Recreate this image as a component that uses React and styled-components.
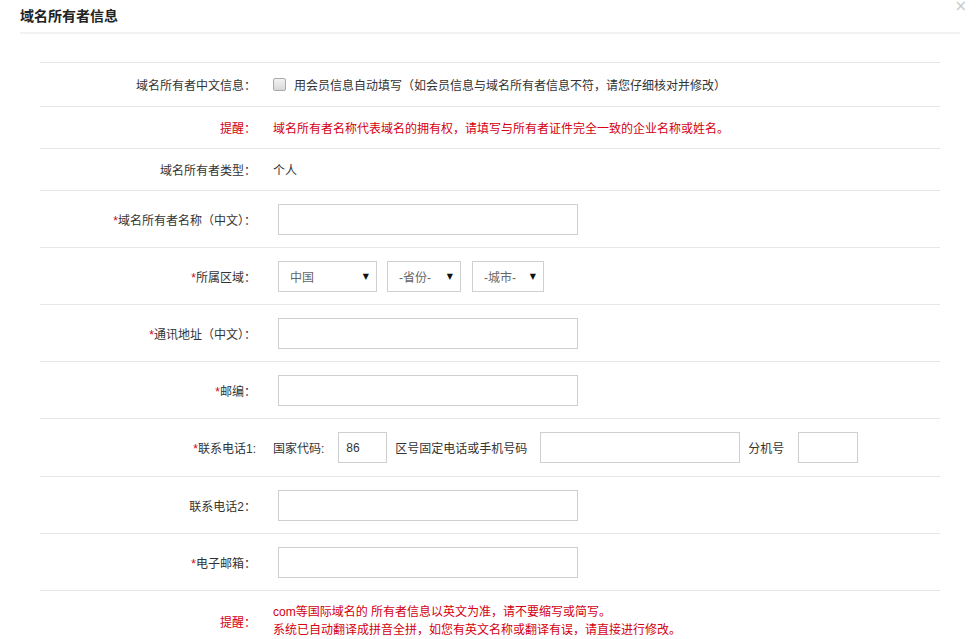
import React from 'react';
import styled, { createGlobalStyle } from 'styled-components';

const GlobalStyle = createGlobalStyle`
  html, body {
    margin: 0;
    background: #fff;
  }
  body {
    font-family: "Liberation Sans", "Noto Sans CJK SC", sans-serif;
    font-size: 12px;
    color: #333;
  }
`;

const Dialog = styled.div`
  position: relative;
  width: 979px;
  padding: 0 0 20px;
`;

const Header = styled.div`
  margin: 0 19px 0 20px;
  height: 32px;
  border-bottom: 2px solid #f2f2f2;
  display: flex;
  align-items: center;
`;

const Title = styled.h2`
  margin: 0;
  font-size: 14px;
  font-weight: bold;
  color: #222;
  line-height: 20px;
`;

const Close = styled.span`
  position: absolute;
  top: 0;
  right: 12px;
  font-size: 15px;
  line-height: 12px;
  color: #c8c8c8;
  font-family: "DejaVu Sans", sans-serif;
`;

const Table = styled.div`
  margin: 28px 39px 0 40px;
`;

const Row = styled.div`
  display: grid;
  grid-template-columns: 216px 1fr;
  align-items: center;
  min-height: ${(p) => p.$h}px;
  border-top: 1px solid #e6e6e6;
  box-sizing: border-box;
  padding: ${(p) => (p.$pad ? '12px 0' : '0')};
`;

const Label = styled.div`
  text-align: right;
  color: ${(p) => (p.$red ? '#d3000f' : '#333')};
`;

const Star = styled.span`
  color: #d3000f;
`;

const Cell = styled.div`
  padding-left: 17px;
  display: flex;
  align-items: center;
  color: ${(p) => (p.$red ? '#d3000f' : '#333')};
`;

const Notes = styled.div`
  padding-left: 17px;
  color: #d3000f;
  line-height: 18px;
`;

const Check = styled.input`
  appearance: none;
  margin: 0 8px 0 0;
  width: 13px;
  height: 13px;
  border: 1px solid #a9a9a9;
  border-radius: 2px;
  background: linear-gradient(#f2f2f2, #d8d8d8);
  box-sizing: border-box;
`;

const Input = styled.input`
  box-sizing: border-box;
  width: ${(p) => p.$w}px;
  height: 31px;
  margin-left: ${(p) => p.$ml || 0}px;
  border: 1px solid #cfcfcf;
  padding: 0 7px;
  font-family: inherit;
  font-size: 12px;
  color: #333;
  outline: none;
`;

const Select = styled.div`
  box-sizing: border-box;
  width: ${(p) => p.$w}px;
  height: 31px;
  margin-left: ${(p) => p.$ml || 0}px;
  border: 1px solid #cfcfcf;
  padding: 0 7px 0 11px;
  display: flex;
  align-items: center;
  justify-content: space-between;
  color: #666;
`;

const Arrow = styled.span`
  font-size: 8px;
  color: #111;
  font-family: "DejaVu Sans", sans-serif;
`;

const Text = styled.span`
  margin: 0 ${(p) => p.$mr || 0}px 0 ${(p) => p.$ml || 0}px;
  white-space: nowrap;
`;

const Field = ({ label, required, w = 300 }) => (
  <Row $h={57}>
    <Label>
      {required && <Star>*</Star>}
      {label}
    </Label>
    <Cell>
      <Input $w={w} $ml={5} />
    </Cell>
  </Row>
);

export default function App() {
  return (
    <>
      <GlobalStyle />
      <Dialog>
        <Header>
          <Title>域名所有者信息</Title>
        </Header>
        <Close>×</Close>
        <Table>
          <Row $h={44}>
            <Label>域名所有者中文信息：</Label>
            <Cell>
              <Check type="checkbox" />
              用会员信息自动填写（如会员信息与域名所有者信息不符，请您仔细核对并修改）
            </Cell>
          </Row>
          <Row $h={42}>
            <Label $red>提醒：</Label>
            <Cell $red>域名所有者名称代表域名的拥有权，请填写与所有者证件完全一致的企业名称或姓名。</Cell>
          </Row>
          <Row $h={42}>
            <Label>域名所有者类型：</Label>
            <Cell>个人</Cell>
          </Row>
          <Field label="域名所有者名称（中文）：" required />
          <Row $h={57}>
            <Label>
              <Star>*</Star>所属区域：
            </Label>
            <Cell>
              <Select $w={99} $ml={5}>
                中国<Arrow>▼</Arrow>
              </Select>
              <Select $w={74} $ml={10}>
                -省份-<Arrow>▼</Arrow>
              </Select>
              <Select $w={72} $ml={11}>
                -城市-<Arrow>▼</Arrow>
              </Select>
            </Cell>
          </Row>
          <Field label="通讯地址（中文）：" required />
          <Field label="邮编：" required />
          <Row $h={58}>
            <Label>
              <Star>*</Star>联系电话1:
            </Label>
            <Cell>
              <Text $mr={14}>国家代码:</Text>
              <Input $w={49} defaultValue="86" />
              <Text $ml={8} $mr={13}>区号固定电话或手机号码</Text>
              <Input $w={200} />
              <Text $ml={8} $mr={14}>分机号</Text>
              <Input $w={60} />
            </Cell>
          </Row>
          <Field label="联系电话2：" />
          <Field label="电子邮箱：" required />
          <Row $h={60} $pad>
            <Label $red>提醒：</Label>
            <Notes>
              com等国际域名的 所有者信息以英文为准，请不要缩写或简写。
              <br />
              系统已自动翻译成拼音全拼，如您有英文名称或翻译有误，请直接进行修改。
            </Notes>
          </Row>
        </Table>
      </Dialog>
    </>
  );
}
